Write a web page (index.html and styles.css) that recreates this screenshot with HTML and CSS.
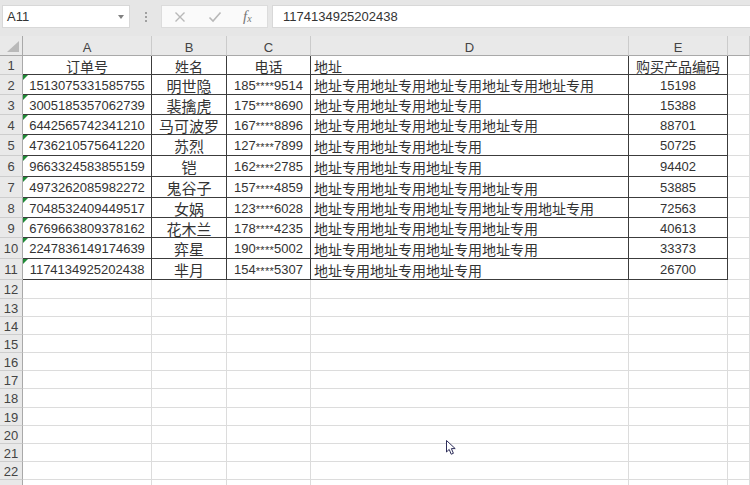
FILE: index.html
```html
<!DOCTYPE html>
<html>
<head>
<meta charset="utf-8">
<link rel="stylesheet" href="styles.css">
</head>
<body>
<div class="toolbar">
  <div class="namebox"><span>A11</span><span class="caret"></span></div>
  <div class="dots"><i></i><i></i><i></i></div>
  <div class="fxbox">
    <svg class="ic" width="12" height="12" viewBox="0 0 12 12"><path d="M1.5 1.5L10.5 10.5M10.5 1.5L1.5 10.5" stroke="#b8b8b8" stroke-width="1.4" fill="none"/></svg>
    <svg class="ic" width="14" height="12" viewBox="0 0 14 12"><path d="M1.5 6.5L5 10L12.5 1.5" stroke="#b8b8b8" stroke-width="1.6" fill="none"/></svg>
    <span class="fx">f<sub>x</sub></span>
  </div>
  <div class="formula">1174134925202438</div>
</div>

<div class="sheet">
  <div class="row hdr"><div class="corner"><span class="ctri"></span></div><div>A</div><div>B</div><div>C</div><div>D</div><div>E</div><div></div></div>

  <div class="row d h19"><div class="rh">1</div><div class="c ct t14">订单号</div><div class="c ct t14">姓名</div><div class="c ct t14">电话</div><div class="c lt t14">地址</div><div class="c ct t14">购买产品编码</div><div class="g"></div></div>
  <div class="row d h20"><div class="rh">2</div><div class="c ct tri">1513075331585755</div><div class="c ct nm">明世隐</div><div class="c ct">185<span class="ast">****</span>9514</div><div class="c lt t14">地址专用地址专用地址专用地址专用地址专用</div><div class="c ct">15198</div><div class="g"></div></div>
  <div class="row d h20"><div class="rh">3</div><div class="c ct tri">3005185357062739</div><div class="c ct nm">裴擒虎</div><div class="c ct">175<span class="ast">****</span>8690</div><div class="c lt t14">地址专用地址专用地址专用</div><div class="c ct">15388</div><div class="g"></div></div>
  <div class="row d h20"><div class="rh">4</div><div class="c ct tri">6442565742341210</div><div class="c ct nm">马可波罗</div><div class="c ct">167<span class="ast">****</span>8896</div><div class="c lt t14">地址专用地址专用地址专用地址专用</div><div class="c ct">88701</div><div class="g"></div></div>
  <div class="row d h21"><div class="rh">5</div><div class="c ct tri">4736210575641220</div><div class="c ct nm">苏烈</div><div class="c ct">127<span class="ast">****</span>7899</div><div class="c lt t14">地址专用地址专用地址专用</div><div class="c ct">50725</div><div class="g"></div></div>
  <div class="row d h21"><div class="rh">6</div><div class="c ct tri">9663324583855159</div><div class="c ct nm">铠</div><div class="c ct">162<span class="ast">****</span>2785</div><div class="c lt t14">地址专用地址专用地址专用</div><div class="c ct">94402</div><div class="g"></div></div>
  <div class="row d h21"><div class="rh">7</div><div class="c ct tri">4973262085982272</div><div class="c ct nm">鬼谷子</div><div class="c ct">157<span class="ast">****</span>4859</div><div class="c lt t14">地址专用地址专用地址专用地址专用</div><div class="c ct">53885</div><div class="g"></div></div>
  <div class="row d h20"><div class="rh">8</div><div class="c ct tri">7048532409449517</div><div class="c ct nm">女娲</div><div class="c ct">123<span class="ast">****</span>6028</div><div class="c lt t14">地址专用地址专用地址专用地址专用地址专用</div><div class="c ct">72563</div><div class="g"></div></div>
  <div class="row d h20"><div class="rh">9</div><div class="c ct tri">6769663809378162</div><div class="c ct nm">花木兰</div><div class="c ct">178<span class="ast">****</span>4235</div><div class="c lt t14">地址专用地址专用地址专用地址专用</div><div class="c ct">40613</div><div class="g"></div></div>
  <div class="row d h21"><div class="rh">10</div><div class="c ct tri">2247836149174639</div><div class="c ct nm">弈星</div><div class="c ct">190<span class="ast">****</span>5002</div><div class="c lt t14">地址专用地址专用地址专用地址专用</div><div class="c ct">33373</div><div class="g"></div></div>
  <div class="row d h21"><div class="rh">11</div><div class="c ct tri">1174134925202438</div><div class="c ct nm">芈月</div><div class="c ct">154<span class="ast">****</span>5307</div><div class="c lt t14">地址专用地址专用地址专用</div><div class="c ct">26700</div><div class="g"></div></div>

  <div class="row e h19"><div class="rh">12</div><div class="g"></div><div class="g"></div><div class="g"></div><div class="g"></div><div class="g"></div><div class="g"></div></div>
  <div class="row e h18"><div class="rh">13</div><div class="g"></div><div class="g"></div><div class="g"></div><div class="g"></div><div class="g"></div><div class="g"></div></div>
  <div class="row e h18"><div class="rh">14</div><div class="g"></div><div class="g"></div><div class="g"></div><div class="g"></div><div class="g"></div><div class="g"></div></div>
  <div class="row e h18"><div class="rh">15</div><div class="g"></div><div class="g"></div><div class="g"></div><div class="g"></div><div class="g"></div><div class="g"></div></div>
  <div class="row e h18"><div class="rh">16</div><div class="g"></div><div class="g"></div><div class="g"></div><div class="g"></div><div class="g"></div><div class="g"></div></div>
  <div class="row e h18"><div class="rh">17</div><div class="g"></div><div class="g"></div><div class="g"></div><div class="g"></div><div class="g"></div><div class="g"></div></div>
  <div class="row e h19"><div class="rh">18</div><div class="g"></div><div class="g"></div><div class="g"></div><div class="g"></div><div class="g"></div><div class="g"></div></div>
  <div class="row e h18"><div class="rh">19</div><div class="g"></div><div class="g"></div><div class="g"></div><div class="g"></div><div class="g"></div><div class="g"></div></div>
  <div class="row e h18"><div class="rh">20</div><div class="g"></div><div class="g"></div><div class="g"></div><div class="g"></div><div class="g"></div><div class="g"></div></div>
  <div class="row e h18"><div class="rh">21</div><div class="g"></div><div class="g"></div><div class="g"></div><div class="g"></div><div class="g"></div><div class="g"></div></div>
  <div class="row e h18"><div class="rh">22</div><div class="g"></div><div class="g"></div><div class="g"></div><div class="g"></div><div class="g"></div><div class="g"></div></div>
  <div class="row e h18"><div class="rh"></div><div class="g"></div><div class="g"></div><div class="g"></div><div class="g"></div><div class="g"></div><div class="g"></div></div>
</div>

<svg class="cursor" width="12" height="16" viewBox="0 0 12 16"><path d="M0.5 0.5L0.5 12L3.2 9.4L5.2 14.2L7.4 13.3L5.4 8.6L9.2 8.6Z" fill="#fff" stroke="#2e2e5a" stroke-width="1" stroke-linejoin="miter"/></svg>
</body>
</html>
```

FILE: styles.css
```css
* { box-sizing: border-box; }
html, body { margin: 0; padding: 0; }
body {
  width: 750px;
  height: 485px;
  overflow: hidden;
  background: #fff;
  font-family: "Liberation Sans", "Noto Sans CJK SC", sans-serif;
  color: #333;
  position: relative;
}

/* ---------- formula bar ---------- */
.toolbar {
  height: 36px;
  background: #e6e6e6;
  display: flex;
  align-items: flex-start;
  padding: 5px 0 0 2px;
}
.namebox {
  width: 128px;
  height: 23px;
  background: #fff;
  border: 1px solid #d8d8d8;
  display: flex;
  align-items: center;
  justify-content: space-between;
  padding: 0 5px 0 4px;
  font-size: 13px;
  color: #333;
}
.caret {
  width: 0;
  height: 0;
  border-left: 3.5px solid transparent;
  border-right: 3.5px solid transparent;
  border-top: 4px solid #808080;
}
.dots {
  width: 31px;
  height: 23px;
  display: flex;
  flex-direction: column;
  align-items: center;
  justify-content: center;
  gap: 2px;
}
.dots i {
  display: block;
  width: 2px;
  height: 2px;
  background: #a0a0a0;
}
.fxbox {
  width: 107px;
  height: 23px;
  background: #fafafa;
  border: 1px solid #dcdcdc;
  display: flex;
  align-items: center;
  padding-left: 12px;
}
.fxbox .ic { display: block; }
.fxbox .ic:first-child { margin-right: 22px; }
.fxbox .ic:nth-child(2) { margin-right: 21px; }
.fx {
  font-family: "Liberation Serif", serif;
  font-style: italic;
  font-size: 15px;
  color: #777;
  line-height: 1;
}
.fx sub {
  font-size: 10px;
  vertical-align: -1px;
}
.formula {
  flex: 1;
  margin-left: 4px;
  height: 23px;
  background: #fff;
  border: 1px solid #d8d8d8;
  border-right: none;
  padding-left: 10px;
  font-size: 13px;
  line-height: 21px;
  color: #333;
}

/* ---------- sheet ---------- */
.row {
  display: grid;
  grid-template-columns: 23px 129px 75px 84px 318px 99px 22px;
}
.row > div {
  border-right: 1px solid #dcdcdc;
  border-bottom: 1px solid #dcdcdc;
  display: flex;
  align-items: center;
  overflow: hidden;
  white-space: nowrap;
}
.h18 { height: 18px; }
.h19 { height: 19px; }
.h20 { height: 20px; }
.h21 { height: 21px; }

.hdr { height: 20px; }
.hdr > div {
  background: #e9e9e9;
  border-right: 1px solid #cbcbcb;
  border-bottom: 1px solid #a9a9a9;
  justify-content: center;
  font-size: 13px;
  color: #444;
  padding-top: 3px;
}
.hdr > .corner {
  justify-content: flex-end;
  align-items: flex-end;
  padding: 0 3px 3px 0;
  border-right: 1px solid #a9a9a9;
}
.ctri {
  width: 0;
  height: 0;
  border-left: 12px solid transparent;
  border-bottom: 11px solid #b9b9b9;
}

.row > .rh {
  background: #e9e9e9;
  border-right: 1px solid #a9a9a9;
  border-bottom: 1px solid #cdcdcd;
  justify-content: center;
  font-size: 13px;
  color: #444;
  padding-top: 1px;
}

.d > .c {
  border-right: 1px solid #3c3c3c;
  border-bottom: 1px solid #3c3c3c;
  font-size: 13px;
  color: #333;
  padding-top: 1px;
}
.ct { justify-content: center; }
.lt { justify-content: flex-start; padding-left: 3px; }
.t14 { font-size: 14px !important; }
.nm { font-size: 15px !important; }
.ast {
  font-size: 11px;
  letter-spacing: 0.3px;
  position: relative;
  top: 1px;
}

.tri { position: relative; }
.tri::before {
  content: "";
  position: absolute;
  left: 0;
  top: 0;
  width: 0;
  height: 0;
  border-top: 5px solid #1f8a36;
  border-right: 5px solid transparent;
}

.cursor {
  position: absolute;
  left: 446px;
  top: 440px;
}
```
